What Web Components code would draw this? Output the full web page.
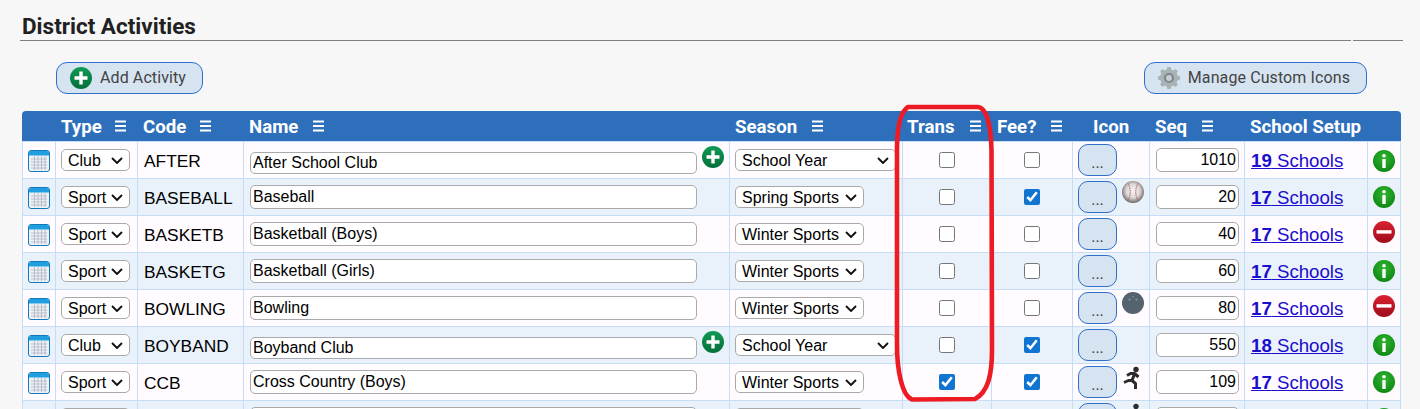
<!DOCTYPE html>
<html lang="en">
<head>
<meta charset="utf-8">
<title>District Activities</title>
<style>
  html, body { margin: 0; height: 409px; overflow: hidden; background: #f7f7f7; }
  body { font-family: "Liberation Sans", Arial, sans-serif; }
</style>
</head>
<body>
<activities-page>
  <section-title slot="title">District Activities</section-title>

  <pill-button slot="toolbar" icon="plus">Add Activity</pill-button>
  <pill-button slot="toolbar" icon="gear">Manage Custom Icons</pill-button>

  <activity-table>
    <activity-row type="Club" code="AFTER" name="After School Club" season="School Year" seq="1010" count="19" status="info" offset-status="8"></activity-row>
    <activity-row striped type="Sport" code="BASEBALL" name="Baseball" season="Spring Sports" fee icon="baseball" seq="20" count="17" status="info"></activity-row>
    <activity-row type="Sport" code="BASKETB" name="Basketball (Boys)" season="Winter Sports" seq="40" count="17" status="minus"></activity-row>
    <activity-row striped type="Sport" code="BASKETG" name="Basketball (Girls)" season="Winter Sports" seq="60" count="17" status="info"></activity-row>
    <activity-row type="Sport" code="BOWLING" name="Bowling" season="Winter Sports" icon="bowling" seq="80" count="17" status="minus"></activity-row>
    <activity-row striped type="Club" code="BOYBAND" name="Boyband Club" season="School Year" fee seq="550" count="18" status="info"></activity-row>
    <activity-row type="Sport" code="CCB" name="Cross Country (Boys)" season="Winter Sports" trans fee icon="runner" seq="109" count="17" status="info"></activity-row>
    <activity-row striped type="Sport" icon="runner" status="info"></activity-row>
  </activity-table>

  <hand-outline slot="overlay"></hand-outline>
</activities-page>

<script>
// Shared icon markup, each one drawn on a 22 unit box
const ICONS = {
  plus: `<svg viewBox="0 0 22 22" width="22" height="22">
    <defs><linearGradient id="gp" x1="0" y1="0" x2="0" y2="1"><stop offset="0" stop-color="#0f9a55"/><stop offset="1" stop-color="#04703a"/></linearGradient></defs>
    <circle cx="11" cy="11" r="11" fill="url(#gp)"/>
    <path d="M11 4.500v13M4.500 11h13" stroke="#fff" stroke-width="3.400"/></svg>`,
  gear: `<svg viewBox="0 0 22 22" width="22" height="22">
    <g fill="#a9b3b5"><circle cx="11" cy="11" r="9"/>
    <rect x="9" y="0" width="4" height="22" rx="1"/>
    <rect x="9" y="0" width="4" height="22" rx="1" transform="rotate(45 11 11)"/>
    <rect x="9" y="0" width="4" height="22" rx="1" transform="rotate(90 11 11)"/>
    <rect x="9" y="0" width="4" height="22" rx="1" transform="rotate(135 11 11)"/></g>
    <circle cx="11" cy="11" r="4" fill="#c5d0d6" stroke="#7f8889" stroke-width="2.200"/></svg>`,
  calendar: `<svg viewBox="0 0 22 22" width="22" height="22">
    <rect x=".5" y=".5" width="21" height="21" rx="2.500" fill="#eef2f7" stroke="#1579b8"/>
    <path d="M1 3a2 2 0 0 1 2-2h16a2 2 0 0 1 2 2v2.500H1z" fill="#1f9fdf"/>
    <path d="M3 9h16M3 12h16M3 15h16M3 18h16M6.500 6v14M10 6v14M13.500 6v14M17 6v14" stroke="#b4b8c4" stroke-width=".9" fill="none"/></svg>`,
  info: `<svg viewBox="0 0 22 22" width="22" height="22">
    <defs><radialGradient id="gi" cx=".5" cy=".35" r=".7"><stop offset="0" stop-color="#2fb52f"/><stop offset="1" stop-color="#0c8412"/></radialGradient></defs>
    <circle cx="11" cy="11" r="11" fill="url(#gi)"/>
    <circle cx="11" cy="5.800" r="1.800" fill="#fff"/><rect x="9.300" y="9" width="3.400" height="9" fill="#fff"/></svg>`,
  minus: `<svg viewBox="0 0 22 22" width="22" height="22">
    <defs><linearGradient id="gm" x1="0" y1="0" x2="0" y2="1"><stop offset="0" stop-color="#d9202f"/><stop offset="1" stop-color="#a00d1c"/></linearGradient></defs>
    <circle cx="11" cy="11" r="11" fill="url(#gm)"/>
    <rect x="3.500" y="9.200" width="15" height="3.400" fill="#fff"/></svg>`,
  baseball: `<svg viewBox="0 0 22 22" width="22" height="22">
    <defs><radialGradient id="gb" cx=".5" cy=".45" r=".56"><stop offset="0" stop-color="#f4f2f2"/><stop offset=".55" stop-color="#dcd8d8"/><stop offset=".85" stop-color="#8f8c8c"/><stop offset="1" stop-color="#5f5d5d"/></radialGradient></defs>
    <circle cx="11" cy="11" r="11" fill="url(#gb)"/>
    <path d="M6 2.500C9 7 9 15 6 19.500M16 2.500C13 7 13 15 16 19.500" stroke="#c05f5f" stroke-width="1" stroke-dasharray="1.500 .8" fill="none"/></svg>`,
  bowling: `<svg viewBox="0 0 22 22" width="22" height="22">
    <circle cx="11" cy="11" r="11" fill="#55636f"/>
    <g fill="#8f9ba5"><circle cx="7.500" cy="7.500" r="1"/><circle cx="14.500" cy="7.500" r="1"/><circle cx="11" cy="4.800" r=".8"/></g></svg>`,
  runner: `<svg viewBox="0 0 20 24" width="20" height="24">
    <circle cx="14" cy="3.500" r="2.700" fill="#2b2b2b"/>
    <path d="M12.500 8L10 14.500M5 9.500L8.500 7.500H12.500L16.500 11M10 14.500H6.500L2 16.500M10 14.500L13.500 17.500V23" stroke="#2b2b2b" stroke-width="3" fill="none" stroke-linejoin="round"/></svg>`
};

const CHEVRON = `url("data:image/svg+xml,%3Csvg xmlns='http://www.w3.org/2000/svg' width='12' height='7' viewBox='0 0 12 7'%3E%3Cpath d='M1 1l5 5 5-5' fill='none' stroke='%23111' stroke-width='1.900'/%3E%3C/svg%3E")`;

class ActivitiesPage extends HTMLElement {
  constructor() {
    super();
    this.attachShadow({ mode: "open" });
    this.shadowRoot.innerHTML = `
      <style>
        :host { display: block; position: relative; box-sizing: border-box; height: 409px; overflow: hidden; padding: 14px 0 0 20px; width: 1420px; }
        .content { width: 1383px; }
        .toolbar { display: flex; justify-content: space-between; margin: 21px 36px 17px 36px; }
        .grid { margin: 0 2px; }
      </style>
      <div class="content">
        <slot name="title"></slot>
        <div class="toolbar"><slot name="toolbar"></slot></div>
        <div class="grid"><slot></slot></div>
      </div>
      <slot name="overlay"></slot>
    `;
  }
}

class SectionTitle extends HTMLElement {
  constructor() {
    super();
    this.attachShadow({ mode: "open" });
    this.shadowRoot.innerHTML = `
      <style>
        :host { display: block; }
        h2 { margin: 0 0 1px 2px; font: 700 22.500px/25px Roboto, sans-serif; color: #212121; }
        .rule { display: flex; gap: 2px; }
        .rule span { height: 1px; background: #808080; }
        .rule span:first-child { flex: 1; }
        .rule span:last-child { width: 50px; }
      </style>
      <h2><slot></slot></h2>
      <div class="rule"><span></span><span></span></div>
    `;
  }
}

class PillButton extends HTMLElement {
  constructor() {
    super();
    this.attachShadow({ mode: "open" });
    this.shadowRoot.innerHTML = `
      <style>
        :host { display: block; }
        button {
          display: flex; align-items: center; gap: 8px; box-sizing: border-box;
          height: 32px; padding: 0 16px 0 13px;
          border: 1px solid #2f6fc9; border-radius: 11px; background: #d6e3f1;
          font: 400 16px Roboto, sans-serif; letter-spacing: .1px; color: #444;
        }
        slot { display: block; margin-top: -2px; }
        svg { display: block; }
      </style>
      <button>${ICONS[this.getAttribute("icon")]}<slot></slot></button>
    `;
  }
}

class ActivityTable extends HTMLElement {
  constructor() {
    super();
    this.attachShadow({ mode: "open" });
    const sort = `<svg viewBox="0 0 11 12" width="11" height="12"><path d="M0 1.500h11M0 6h11M0 10.500h11" stroke="#fff" stroke-width="1.800"/></svg>`;
    const head = (label, left, sortable) => `<div class="h" style="padding-left:${left}px"><span>${label}</span>${sortable ? `<i style="margin-left:${sortable}px">${sort}</i>` : ""}</div>`;
    this.shadowRoot.innerHTML = `
      <style>
        :host { display: block; }
        .head {
          display: grid; height: 30px; align-items: center;
          grid-template-columns: 33px 82px 106px 486px 173px 89px 81px 77px 95px 123px 34px;
          background: #2e6fbb; border-radius: 4px 4px 0 0;
          font: 700 18.670px Roboto, sans-serif; color: #fff;
        }
        .h { display: flex; align-items: center; white-space: nowrap; }
        .h span { margin-top: 2px; }
        i { display: block; }
        svg { display: block; }
      </style>
      <div class="head">
        <div></div>
        ${head("Type", 6, 13)}
        ${head("Code", 6, 14)}
        ${head("Name", 6, 15)}
        ${head("Season", 6, 15)}
        ${head("Trans", 5, 15)}
        ${head("Fee?", 6, 15)}
        ${head("Icon", 21, 0)}
        ${head("Seq", 6, 15)}
        ${head("School Setup", 6, 0)}
        <div></div>
      </div>
      <slot></slot>
    `;
  }
}

class ActivityRow extends HTMLElement {
  constructor() {
    super();
    this.attachShadow({ mode: "open" });
  }

  connectedCallback() {
    const attr = (n) => this.getAttribute(n) || "";
    const club = attr("type") === "Club";
    const season = attr("season");
    const opt = (v) => v ? `<option>${v}</option>` : "";
    const statusTop = this.getAttribute("offset-status") || (attr("status") === "minus" ? 5 : 7);
    const icon = attr("icon");
    const count = attr("count");

    this.shadowRoot.innerHTML = `
      <style>
        :host { display: block; }
        .row {
          display: grid; height: 37px; box-sizing: border-box;
          grid-template-columns: 33px 82px 106px 486px 173px 89px 81px 77px 95px 123px 34px;
          background: #fffbff; border-top: 1px solid #c5ddf5; border-right: 1px solid #c5ddf5;
          width: 1379px;
        }
        :host([striped]) .row { background: #e9f2fa; }
        .c { box-sizing: border-box; border-left: 1px solid #c5ddf5; display: flex; align-items: flex-start; min-width: 0; overflow: visible; }
        svg { display: block; }
        select, input[type=text] {
          box-sizing: border-box; margin: 0; color: #000;
          border: 1px solid #a9a9a9; border-radius: 5px;
          font: 400 16px "Liberation Sans", Arial, sans-serif;
        }
        input[type=text] { background: #fff; height: 24px; padding: 0 2px; }
        select {
          height: 22px; padding: 0 0 0 6px; appearance: none;
          background: #fff ${CHEVRON} no-repeat right 6px center;
        }
        input[type=checkbox] { width: 16px; height: 16px; margin: 10px 0 0; accent-color: #0f75d0; }
        .cal { padding: 8px 0 0 5px; }
        .type { padding: 7px 0 0 5px; }
        .type select { width: 69px; }
        .code { padding: 9px 0 0 6px; font-size: 17.330px; color: #000; white-space: nowrap; }
        .name { padding: ${club ? 10 : 6}px 0 0 6px; position: relative; }
        .name input { width: 447px; ${club ? "height: 22px;" : ""} }
        .name svg { position: absolute; left: 458px; top: 4px; }
        .season { padding: 7px 0 0 5px; }
        .season select { width: ${club ? 161 : 129}px; }
        .chk { justify-content: center; }
        .ico { padding: 2px 0 0 5px; gap: 5px; }
        .more {
          width: 39px; height: 32px; box-sizing: border-box; padding: 5px 0 0;
          border: 1px solid #2f6fc9; border-radius: 10px; background: #d6e3f1;
          font: 400 16px Roboto, sans-serif; color: #444;
        }
        .seq { padding: 6px 0 0 6px; }
        .seq input { width: 83px; text-align: right; }
        .link { padding: 8px 0 0 6px; white-space: nowrap; }
        a { font-size: 18.670px; color: #1a0dcc; }
        .st { padding: ${statusTop}px 0 0 5px; }
      </style>
      <div class="row">
        <div class="c cal">${ICONS.calendar}</div>
        <div class="c type"><select>${opt(attr("type"))}</select></div>
        <div class="c code">${attr("code")}</div>
        <div class="c name"><input type="text" value="${attr("name")}">${club ? ICONS.plus : ""}</div>
        <div class="c season"><select>${opt(season)}</select></div>
        <div class="c chk"><input type="checkbox" ${this.hasAttribute("trans") ? "checked" : ""}></div>
        <div class="c chk"><input type="checkbox" ${this.hasAttribute("fee") ? "checked" : ""}></div>
        <div class="c ico"><button class="more">${attr("code") ? "..." : ""}</button>${icon ? ICONS[icon] : ""}</div>
        <div class="c seq"><input type="text" value="${attr("seq")}"></div>
        <div class="c link">${count ? `<a href="#"><b>${count}</b> Schools</a>` : ""}</div>
        <div class="c st">${ICONS[attr("status")]}</div>
      </div>
    `;
  }
}

// Red marker ring that was hand drawn over the Trans column
class HandOutline extends HTMLElement {
  constructor() {
    super();
    this.attachShadow({ mode: "open" });
    this.shadowRoot.innerHTML = `
      <style>
        :host { display: block; position: absolute; left: 880px; top: 95px; pointer-events: none; }
        svg { display: block; }
      </style>
      <svg width="130" height="314" viewBox="880 95 130 314">
        <path d="M908 107L978 107C988 108 991 130 991.500 150L992 350C992 375 988 392 975 399L912 399.500C902 396 897 370 897 345L897 150C897 130 900 112 908 107Z" fill="none" stroke="#ed1c24" stroke-width="4.600"/>
      </svg>
    `;
  }
}

customElements.define("activities-page", ActivitiesPage);
customElements.define("section-title", SectionTitle);
customElements.define("pill-button", PillButton);
customElements.define("activity-table", ActivityTable);
customElements.define("activity-row", ActivityRow);
customElements.define("hand-outline", HandOutline);
</script>
</body>
</html>
